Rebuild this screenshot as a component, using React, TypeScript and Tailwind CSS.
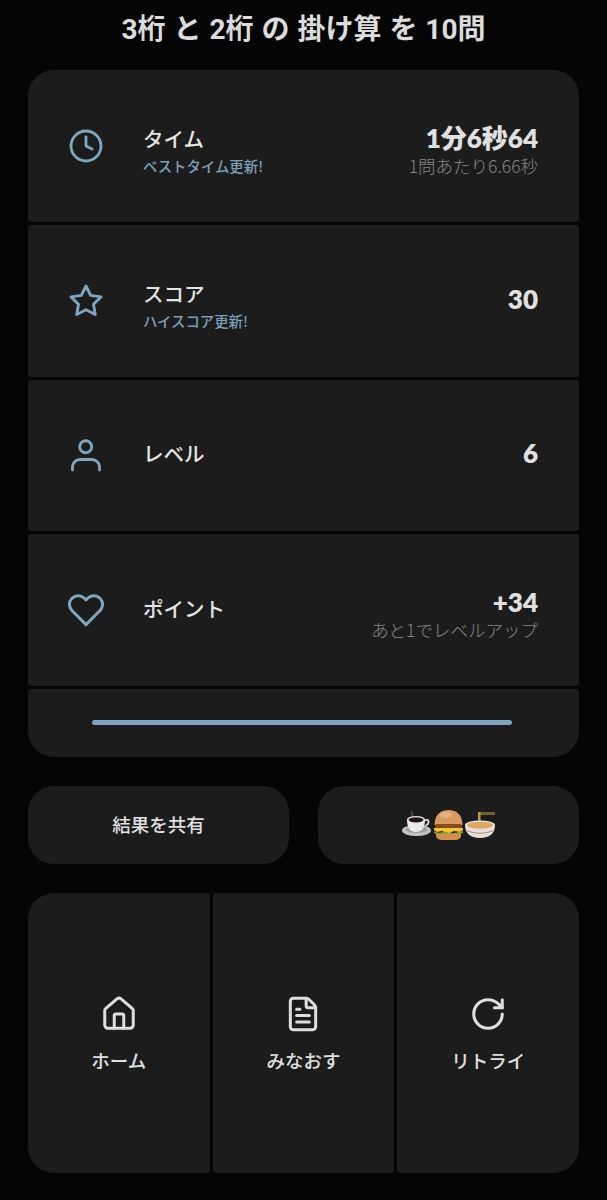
import type { ComponentType } from "react";
import { Clock, House, FileText, RotateCw } from "lucide-react";
import { FiHeart, FiStar } from "react-icons/fi";
import { clsx } from "clsx";

const jp = "font-['Noto_Sans_CJK_JP','Noto_Sans',sans-serif]";

type IconType = ComponentType<{ size?: number; strokeWidth?: number; className?: string }>;

type Stat = {
  icon: IconType;
  iconSize?: number;
  title: string;
  note?: string;
  value: string;
  sub?: string;
  rounded?: boolean;
};

// wider shoulders than the lucide user
function PersonIcon({ size, strokeWidth, className }: { size?: number; strokeWidth?: number; className?: string }) {
  return (
    <svg
      width={size}
      height={size}
      viewBox="0 0 24 24"
      fill="none"
      stroke="currentColor"
      strokeWidth={strokeWidth}
      strokeLinecap="round"
      className={className}
    >
      <circle cx="11.800" cy="6.500" r="4" />
      <path d="M3 22v-2a5 5 0 0 1 5-5h8a5 5 0 0 1 5 5v2" />
    </svg>
  );
}

const stats: Stat[] = [
  { icon: Clock, title: "タイム", note: "ベストタイム更新!", value: "1分6秒64", sub: "1問あたり6.66秒", rounded: true },
  { icon: FiStar, title: "スコア", note: "ハイスコア更新!", value: "30" },
  { icon: PersonIcon, title: "レベル", value: "6" },
  { icon: FiHeart, iconSize: 38, title: "ポイント", value: "+34", sub: "あと1でレベルアップ" },
];

const actions: { icon: IconType; label: string; cls: string }[] = [
  { icon: House, label: "ホーム", cls: "rounded-tl-[26px] rounded-bl-[26px] rounded-r-[3px]" },
  { icon: FileText, label: "みなおす", cls: "rounded-[3px]" },
  { icon: RotateCw, label: "リトライ", cls: "rounded-tr-[26px] rounded-br-[26px] rounded-l-[3px]" },
];

function StatRow({ stat }: { stat: Stat }) {
  const Icon = stat.icon;
  return (
    <div
      className={clsx(
        "flex h-[151.75px] items-center bg-[#1c1c1c] pl-[40px] pr-[41px]",
        stat.rounded ? "rounded-t-[26px] rounded-b-[3px]" : "rounded-[3px]",
      )}
    >
      <div className="flex w-[36px] shrink-0 justify-center">
        <Icon size={stat.iconSize ?? 36} strokeWidth={1.9} className="shrink-0 text-[#7fa5bf]" />
      </div>
      <div className={clsx("ml-[39px] flex flex-col", stat.note ? "mt-[10px]" : "mb-[4px]")}>
        <span className="text-[20.500px] leading-[30px] font-medium text-[#e4e4e4]">{stat.title}</span>
        {stat.note && (
          <span className="text-[14.400px] leading-[26px] font-medium text-[#7c9fb9]">{stat.note}</span>
        )}
      </div>
      <div className={clsx("ml-auto flex flex-col items-end", stat.sub ? "mt-[10px]" : "mb-[4px]")}>
        <span className="font-['Lato','Noto_Sans_CJK_JP',sans-serif] text-[26px] leading-[30px] font-extrabold text-[#e0e0e0]">
          {stat.value}
        </span>
        {stat.sub && <span className="text-[17.500px] leading-[26px] font-light text-[#858585]">{stat.sub}</span>}
      </div>
    </div>
  );
}

function FoodIcons() {
  return (
    <svg width="96" height="34" viewBox="0 0 96 34" className="ml-[3px]">
      {/* coffee */}
      <path d="M10 3c-2 2 2 3 0 5" stroke="#5a5a5a" strokeWidth="1.400" fill="none" />
      <ellipse cx="14.500" cy="22.500" rx="14.500" ry="5.500" fill="#c4c4c4" />
      <ellipse cx="14.500" cy="21.500" rx="11" ry="3.500" fill="#9d9d9d" />
      <path d="M5 11.500h18c0 7-2 12.500-9 12.500S5 18.500 5 11.500z" fill="#e9e9e9" />
      <ellipse cx="14" cy="11.500" rx="9" ry="3.500" fill="#f1f1f1" />
      <ellipse cx="14" cy="11.800" rx="7.500" ry="2.600" fill="#1f1714" />
      <path d="M23 12.500c4-2.500 5.500 3 0 5.500" stroke="#dcdcdc" strokeWidth="1.800" fill="none" />
      {/* burger */}
      <path d="M32.500 17c0-10 6-15 14-15s14 5 14 15z" fill="#d99a62" />
      <ellipse cx="44" cy="7" rx="6" ry="3" fill="#e8b080" />
      <rect x="33" y="16" width="27" height="5" rx="2" fill="#8a4a24" />
      <path d="M32 20h29v2l-3 2-6-1-6 3-6-3-5 1-3-2z" fill="#f4c62c" />
      <path d="M32 23c3 2 6 2 9 1s8 2 11 1 6-1 9-2v2c-2 2-27 2-29 0z" fill="#7da92a" />
      <path d="M34 25.500h25v2c0 3-3 4.500-6 4.500H40c-3 0-6-1.500-6-4.500z" fill="#d2904e" />
      {/* noodles */}
      <path d="M76 4h17v3H76z" fill="#6f6030" />
      <rect x="76" y="4" width="2.500" height="13" fill="#b89a4a" />
      <path d="M63 17h30c0 8-5 13-15 13S63 25 63 17z" fill="#e6e0dc" />
      <path d="M65.500 23c8 3 17 3 25 0" stroke="#b98a8a" strokeWidth="1.300" fill="none" />
      <ellipse cx="78" cy="17" rx="15" ry="4.500" fill="#e8e2dc" />
      <ellipse cx="78" cy="17.300" rx="13" ry="3.500" fill="#dfa862" />
    </svg>
  );
}

export default function App() {
  return (
    <div className={clsx("flex min-h-[1200px] flex-col bg-[#050505] px-[28px]", jp)}>
      <h1 className="flex h-[70px] items-start justify-center pt-[12px] font-['Roboto','Noto_Sans_CJK_JP',sans-serif] text-[28px] leading-[36px] font-bold [word-spacing:1px] text-[#dcdcdc]">
        3桁 と 2桁 の 掛け算 を 10問
      </h1>

      <div className="flex flex-col gap-[3px]">
        {stats.map((s) => (
          <StatRow key={s.title} stat={s} />
        ))}
        <div className="flex h-[68px] items-center justify-center rounded-t-[3px] rounded-b-[26px] bg-[#1c1c1c] pr-[4px] pb-[1px]">
          <div className="h-[5px] w-[420px] rounded-full bg-[#7fa5c2]" />
        </div>
      </div>

      <div className="mt-[29px] grid grid-cols-2 gap-[29px]">
        <button className="flex h-[78px] items-center justify-center rounded-[26px] bg-[#1c1c1c] text-[18.500px] font-medium text-[#e0e0e0]">
          結果を共有
        </button>
        <button className="flex h-[78px] items-center justify-center rounded-[26px] bg-[#1c1c1c]">
          <FoodIcons />
        </button>
      </div>

      <div className="mt-[29px] grid h-[280px] grid-cols-3 gap-[3px]">
        {actions.map((a) => {
          const Icon = a.icon;
          return (
            <button key={a.label} className={clsx("flex flex-col items-center justify-center bg-[#1c1c1c] pt-[2px]", a.cls)}>
              <Icon size={38} strokeWidth={1.9} className="text-[#dedede]" />
              <span className="mt-[14px] text-[18.500px] leading-[26px] font-medium text-[#e0e0e0]">{a.label}</span>
            </button>
          );
        })}
      </div>
    </div>
  );
}
